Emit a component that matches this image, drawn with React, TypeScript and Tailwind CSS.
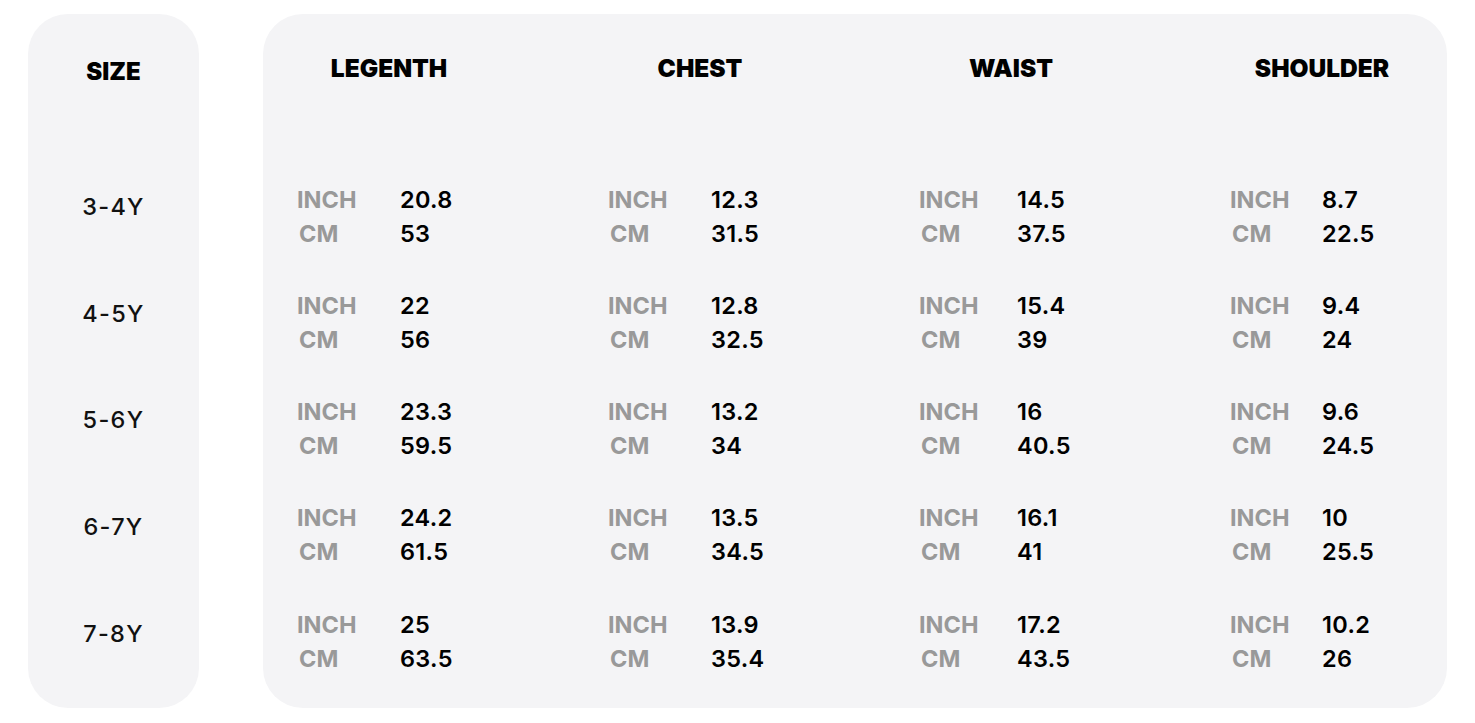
import React from "react";

const cols = [
  { name: "LEGENTH", off: "w-[103px]", rows: [["20.8", "53"], ["22", "56"], ["23.3", "59.5"], ["24.2", "61.5"], ["25", "63.5"]] },
  { name: "CHEST", off: "w-[103px]", rows: [["12.3", "31.5"], ["12.8", "32.5"], ["13.2", "34"], ["13.5", "34.5"], ["13.9", "35.4"]] },
  { name: "WAIST", off: "w-[98px]", rows: [["14.5", "37.5"], ["15.4", "39"], ["16", "40.5"], ["16.1", "41"], ["17.2", "43.5"]] },
  { name: "SHOULDER", off: "w-[92px]", rows: [["8.7", "22.5"], ["9.4", "24"], ["9.6", "24.5"], ["10", "25.5"], ["10.2", "26"]] },
];

const sizes = ["3-4Y", "4-5Y", "5-6Y", "6-7Y", "7-8Y"];

export default function App() {
  return (
    <div
      className="w-[1475px] h-[723px] bg-white flex pt-[14px] pl-[28px] gap-[64px]"
      style={{ fontFamily: "Inter, 'Noto Sans', sans-serif" }}
    >
      <div className="w-[171px] h-[694px] rounded-[40px] bg-[#f4f4f6] flex flex-col items-center">
        <div className="h-[140px] pt-[44px] text-[24px] font-black text-black leading-[28px]">SIZE</div>
        {sizes.map((s) => (
          <div key={s} className="h-[106.6px] flex items-center text-[23.5px] tracking-[1.3px] font-medium text-[#111] leading-[28px]">
            {s}
          </div>
        ))}
      </div>
      <div className="w-[1184px] h-[694px] rounded-[40px] bg-[#f4f4f6] flex pl-[34px]">
        {cols.map((c, ci) => (
          <div key={c.name} className={ci === 3 ? "w-[217px] flex flex-col" : "w-[311px] flex flex-col"}>
            <div className="h-[149px] w-[184px] pt-[40px] text-center text-[24.5px] font-black text-black leading-[28px]">
              {c.name}
            </div>
            {c.rows.map((r, ri) => (
              <div key={ri} className="h-[106.25px] flex flex-col justify-center">
                <div className="flex h-[34px] items-center">
                  <span className={`${c.off} text-[23.5px] font-bold text-[#999999]`}>INCH</span>
                  <span className="text-[23.5px] tracking-[0.3px] font-semibold text-black">{r[0]}</span>
                </div>
                <div className="flex h-[34px] items-center">
                  <span className={`${c.off} pl-[2px] text-[23.5px] font-bold text-[#999999]`}>CM</span>
                  <span className="text-[23.5px] tracking-[0.3px] font-semibold text-black">{r[1]}</span>
                </div>
              </div>
            ))}
          </div>
        ))}
      </div>
    </div>
  );
}
